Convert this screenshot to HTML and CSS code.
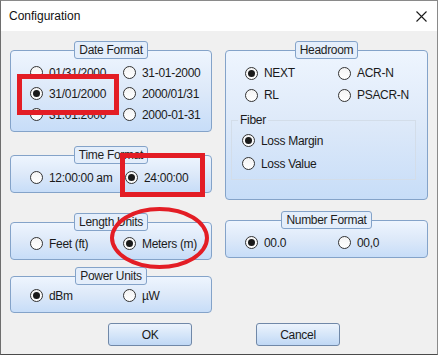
FILE: index.html
```html
<!DOCTYPE html>
<html lang="en">

<head>
  <meta charset="UTF-8">
  <meta name="viewport" content="width=device-width, initial-scale=1.0">
  <title>Configuration</title>
  <link rel="stylesheet" href="styles.css">
</head>

<body>
  <div class="window">
    <div class="titlebar">
      <span class="title">Configuration</span>
      <svg class="close" width="11" height="11" viewBox="0 0 11 11">
        <path d="M0.5 0.5 L10.5 10.5 M10.5 0.5 L0.5 10.5" stroke="#1a1a1a" stroke-width="1.1" fill="none" />
      </svg>
    </div>

    <div class="content">
      <div class="column">
        <div class="group date">
          <div class="legend">Date Format</div>
          <div class="rows">
            <label class="option"><span class="radio"></span>01/31/2000</label>
            <label class="option"><span class="radio"></span>31-01-2000</label>
            <label class="option"><span class="radio checked"></span>31/01/2000</label>
            <label class="option"><span class="radio"></span>2000/01/31</label>
            <label class="option"><span class="radio"></span>31.01.2000</label>
            <label class="option"><span class="radio"></span>2000-01-31</label>
          </div>
        </div>

        <div class="group time">
          <div class="legend">Time Format</div>
          <div class="rows">
            <label class="option"><span class="radio"></span>12:00:00 am</label>
            <label class="option shift"><span class="radio checked"></span>24:00:00</label>
          </div>
        </div>

        <div class="group length">
          <div class="legend">Length Units</div>
          <div class="rows">
            <label class="option"><span class="radio"></span>Feet (ft)</label>
            <label class="option"><span class="radio checked"></span>Meters (m)</label>
          </div>
        </div>

        <div class="group power">
          <div class="legend">Power Units</div>
          <div class="rows">
            <label class="option"><span class="radio checked"></span>dBm</label>
            <label class="option"><span class="radio"></span>µW</label>
          </div>
        </div>
      </div>

      <div class="column">
        <div class="group headroom">
          <div class="legend">Headroom</div>
          <div class="rows tall">
            <label class="option"><span class="radio checked"></span>NEXT</label>
            <label class="option"><span class="radio"></span>ACR-N</label>
            <label class="option"><span class="radio"></span>RL</label>
            <label class="option"><span class="radio"></span>PSACR-N</label>
          </div>
          <fieldset class="fiber">
            <legend>Fiber</legend>
            <label class="option"><span class="radio checked"></span>Loss Margin</label>
            <label class="option"><span class="radio"></span>Loss Value</label>
          </fieldset>
        </div>

        <div class="group number">
          <div class="legend">Number Format</div>
          <div class="rows">
            <label class="option"><span class="radio checked"></span>00.0</label>
            <label class="option"><span class="radio"></span>00,0</label>
          </div>
        </div>
      </div>
    </div>

    <div class="buttons">
      <button>OK</button>
      <button>Cancel</button>
    </div>

    <!-- red markup drawn over the screenshot -->
    <div class="mark mark-date"></div>
    <div class="mark mark-time"></div>
    <div class="mark mark-length"></div>
  </div>
</body>

</html>
```

FILE: styles.css
```css
body {
  margin: 0;
  font-family: 'Liberation Sans', Arial, sans-serif;
  font-size: 12px;
  color: #1a1a1a;
}

.window {
  position: relative;
  width: 438px;
  height: 355px;
  box-sizing: border-box;
  border: 1px solid #8a8a8a;
  border-left-color: #6e6e6e;
  border-bottom-color: #4a4a4a;
  background-color: #f0f0f0;
}

.titlebar {
  height: 30px;
  background-color: white;
  display: flex;
  align-items: center;
  justify-content: space-between;
  padding: 0 10px 0 8px;
}

.title {
  font-size: 12px;
  color: #111;
}

.content {
  display: flex;
  gap: 13px;
  padding: 10px 9px 0 9px;
}

.column {
  display: flex;
  flex-direction: column;
}

.column:first-child {
  width: 202px;
}

.column:last-child {
  width: 203px;
}

.group {
  box-sizing: border-box;
  border: 1px solid #84a3c9;
  border-radius: 4px;
  background: linear-gradient(to bottom, #eef5fe 0%, #dde9f9 50%, #c7ddf8 100%);
  margin-top: 9px;
}

.legend {
  width: fit-content;
  margin: -10px auto 0;
  padding: 0 4px;
  line-height: 16px;
  border: 1px solid #84a3c9;
  border-radius: 3px;
  background-color: #e4eefb;
  color: #1e1e1e;
  letter-spacing: -0.3px;
}

.rows {
  display: grid;
  grid-template-columns: 93px 93px;
  grid-auto-rows: 21px;
  padding-left: 19px;
}

.rows.tall {
  grid-auto-rows: 22px;
}

.option {
  display: flex;
  align-items: center;
  gap: 6px;
  letter-spacing: -0.3px;
  white-space: nowrap;
}

.option.shift {
  margin-left: 2px;
}

.radio {
  position: relative;
  flex: none;
  width: 13px;
  height: 13px;
  box-sizing: border-box;
  border: 1px solid #333;
  border-radius: 50%;
  background: linear-gradient(to bottom, #f4f4f4, #ffffff);
}

.radio.checked::after {
  content: "";
  position: absolute;
  left: 2px;
  top: 2px;
  width: 7px;
  height: 7px;
  border-radius: 50%;
  background-color: #1a1a1a;
}

.date .rows {
  padding-top: 3px;
  padding-bottom: 6px;
}

.time {
  margin-top: 23px;
}

.time .rows {
  padding-top: 3px;
  padding-bottom: 4px;
}

.length {
  margin-top: 29px;
}

.length .rows {
  padding-top: 2px;
  padding-bottom: 5px;
}

.power {
  margin-top: 16px;
}

.power .rows {
  padding-top: 0;
  padding-bottom: 6px;
}

.headroom {
  padding-bottom: 19px;
}

.headroom .rows {
  padding-top: 3px;
}

.fiber {
  margin: 7px 11px 0 5px;
  padding: 2px 0 4px 10px;
  border: 1px solid #d3dde9;
  min-width: 0;
}

.fiber legend {
  padding: 0 2px;
  margin-left: -4px;
  line-height: 14px;
  letter-spacing: -0.3px;
}

.fiber .option {
  height: 23px;
}

.number {
  margin-top: 20px;
}

.number .rows {
  padding-top: 3px;
  padding-bottom: 4px;
}

.buttons {
  display: flex;
  gap: 64px;
  padding-left: 107px;
  margin-top: 10px;
}

button {
  width: 84px;
  height: 23px;
  box-sizing: border-box;
  border: 1px solid #7088a8;
  border-radius: 3px;
  background: linear-gradient(to bottom, #ecf3fc 0%, #d6e6f9 50%, #c0d8f5 100%);
  font-family: 'Liberation Sans', Arial, sans-serif;
  font-size: 12px;
  color: #1a1a1a;
  letter-spacing: -0.3px;
  padding: 0;
}

.mark {
  position: absolute;
  box-sizing: border-box;
  border: 5px solid #e31d25;
}

.mark-date {
  left: 16px;
  top: 73px;
  width: 102px;
  height: 41px;
}

.mark-time {
  left: 119px;
  top: 152px;
  width: 85px;
  height: 44px;
}

.mark-length {
  left: 109px;
  top: 206px;
  width: 99px;
  height: 62px;
  border-width: 4px;
  border-radius: 50%;
}
```
